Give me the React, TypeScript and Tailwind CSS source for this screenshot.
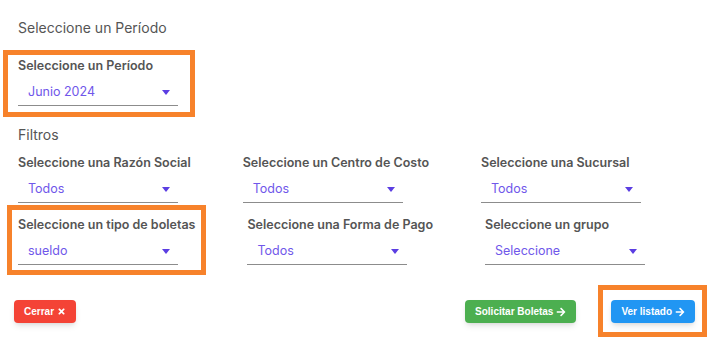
import { FaArrowRight, FaTimes } from "react-icons/fa";

interface FieldProps {
  label: string;
  value: string;
  marked?: boolean;
  boxClass?: string;
}

function Field({ label, value, marked = false, boxClass = "" }: FieldProps) {
  return (
    <div className="relative flex flex-col">
      {marked && (
        <div
          className={`pointer-events-none absolute border-[5px] border-[#f7822b] ${boxClass}`}
        />
      )}
      <span className="mb-[5px] whitespace-nowrap text-[12.5px] font-semibold leading-4 text-[#555]">
        {label}
      </span>
      <div className="flex h-[27px] w-[160px] items-center justify-between border-b border-[#8c8c8c] pl-[10px] pr-[8px]">
        <span className="text-[12.5px] text-[#7057ea]">{value}</span>
        <svg width="8" height="5" viewBox="0 0 8 5">
          <path d="M0 0h8L4 5z" fill="#5b3ee2" />
        </svg>
      </div>
    </div>
  );
}

export default function App() {
  return (
    <div
      className="flex min-h-[356px] w-[726px] flex-col bg-white pt-[18px]"
      style={{ fontFamily: "Inter, 'Noto Sans', sans-serif" }}
    >
      <div className="flex flex-col px-[18px]">
        <h2 className="text-[14px] leading-5 text-[#555]">Seleccione un Período</h2>

        <div className="mt-[20px] flex">
          <Field
            label="Seleccione un Período"
            value="Junio 2024"
            marked
            boxClass="-left-[15px] -right-[17px] -top-[8px] -bottom-[11px]"
          />
        </div>

        <h3 className="mt-[19px] text-[14px] leading-5 text-[#555]">Filtros</h3>

        <div className="mt-[10px] flex gap-x-[52px]">
          <Field label="Seleccione una Razón Social" value="Todos" />
          <Field label="Seleccione un Centro de Costo" value="Todos" />
          <Field label="Seleccione una Sucursal" value="Todos" />
        </div>

        <div className="mt-[14px] flex gap-x-[52px]">
          <Field
            label="Seleccione un tipo de boletas"
            value="sueldo"
            marked
            boxClass="-left-[11px] -right-[11px] -top-[12px] -bottom-[10px]"
          />
          <Field label="Seleccione una Forma de Pago" value="Todos" />
          <Field label="Seleccione un grupo" value="Seleccione" />
        </div>
      </div>

      <div
        className="mt-[35px] flex items-center justify-between pl-[14px] pr-[31px]"
        style={{ fontFamily: "'Liberation Sans', Arial, sans-serif" }}
      >
        <button className="flex h-[23px] items-center gap-[3px] rounded-[4px] bg-[#f44336] px-[10px] text-[10px] font-bold text-white shadow-md">
          Cerrar <FaTimes className="h-[9px] w-[9px]" />
        </button>
        <div className="flex items-center gap-[35px]">
          <button className="flex h-[23px] items-center gap-[3px] rounded-[4px] bg-[#4caf50] px-[10px] text-[10px] font-bold text-white shadow-md">
            Solicitar Boletas <FaArrowRight className="h-[10px] w-[10px]" />
          </button>
          <div className="relative">
            <div className="pointer-events-none absolute -bottom-[14px] -left-[13px] -right-[12px] -top-[15px] border-[5px] border-[#f7822b]" />
            <button className="flex h-[23px] items-center gap-[3px] rounded-[4px] bg-[#2196f3] px-[10px] text-[10px] font-bold text-white shadow-md">
              Ver listado <FaArrowRight className="h-[10px] w-[10px]" />
            </button>
          </div>
        </div>
      </div>
    </div>
  );
}
